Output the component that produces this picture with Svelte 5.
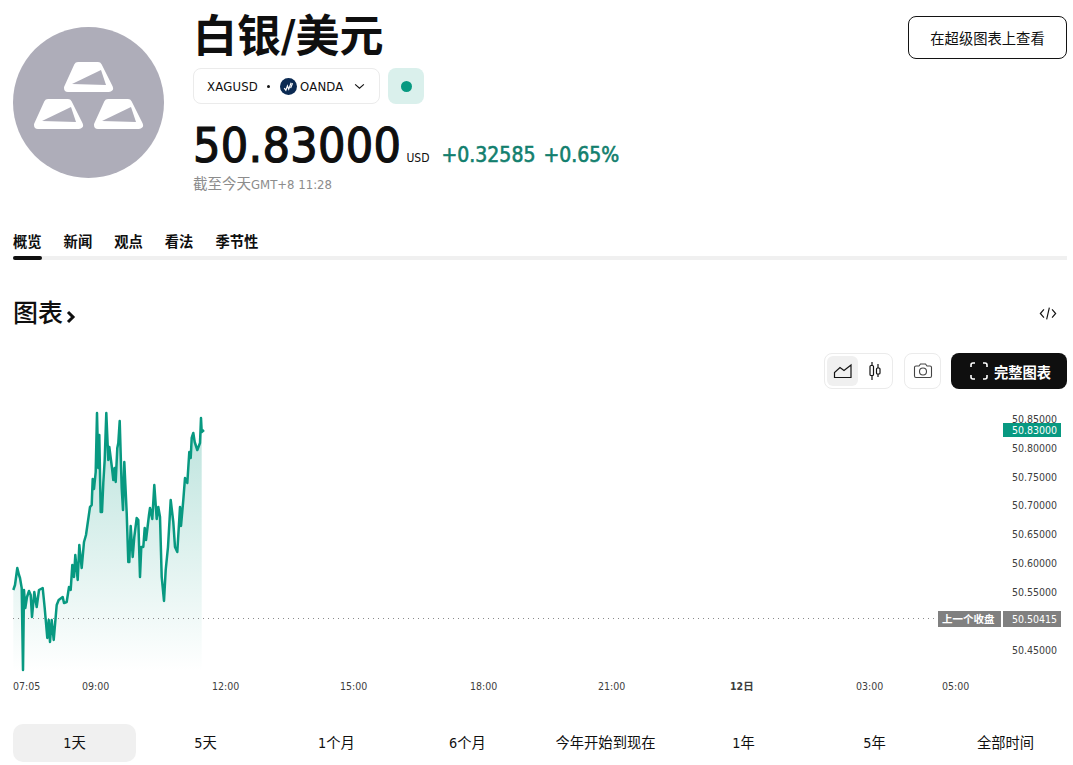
<script>
    const tabs = ['概览', '新闻', '观点', '看法', '季节性'];
    const ranges = ['1天', '5天', '1个月', '6个月', '今年开始到现在', '1年', '5年', '全部时间'];

    const points = [
        [13.3,590],[15,585],[17.3,568],[19,575],[20,578],[21.7,588],[23,670],[24,590],[25.3,608],[27,597],
        [29,591],[30.7,595],[32,617],[34.3,592],[36.7,607],[39,590],[42.7,588],[44.7,608],[47.3,638],[48.7,620],
        [50,642],[51.7,620],[53.7,640],[56.7,605],[58.7,600],[62.7,597],[64,603],[66.7,602],[69,587],[70.7,590],
        [72.3,565],[74,577],[75.3,555],[77.7,580],[79.3,545],[81.7,568],[84,542],[86,535],[90,507],[91.7,505],
        [92.7,479],[94,489],[95.7,472],[97,413],[98.3,468],[99.3,435],[100.7,512],[102,512],[103.3,483],[104.7,460],
        [106.3,413],[108.3,460],[109.3,447],[112,468],[113.3,480],[114.7,468],[115.7,482],[117.3,448],[118.3,443],[119.7,421],
        [121.7,488],[123,510],[124.3,462],[126.7,513],[128.3,562],[129.3,562],[130.7,526],[132.7,557],[134.3,537],[136.7,518],
        [138.3,520],[140,577],[141.3,547],[143.3,547],[144.7,528],[146,540],[149,515],[150,508],[152.3,519],[154.3,485],
        [156.7,519],[158.3,507],[160,517],[161.7,577],[164,601],[165.7,570],[168,547],[170.7,500],[173.3,522],[175,547],
        [177.3,552],[180,507],[181,526],[183.3,500],[185,478],[187.3,483],[189.3,452],[190.7,458],[191.7,438],[193.3,433],
        [194.7,442],[197.3,450],[200,443],[201,418],[201.7,432],[204,430]
    ];

    const line = points.map((p) => p.join(',')).join(' ');
    const area = points.slice(0, -1).map((p) => p.join(',')).join(' ') + ' 201.7,672 13.3,672';

    const prices = [
        ['50.85000', 419], ['50.80000', 448], ['50.75000', 477], ['50.70000', 505],
        ['50.65000', 534], ['50.60000', 563], ['50.55000', 592], ['50.45000', 650]
    ];
    const times = [
        ['07:05', 13], ['09:00', 82], ['12:00', 212], ['15:00', 340], ['18:00', 470],
        ['21:00', 598], ['12日', 730, true], ['03:00', 856], ['05:00', 942]
    ];
    const bars = [[0, 0], [-30, 37], [30, 37]];
</script>

<div class="page">
    <header class="head">
        <div class="logo">
            <svg viewBox="0 0 151 151" width="151" height="151">
                {#each bars as [dx, dy]}
                    <g transform="translate({dx} {dy})">
                        <path class="bar" d="M65 39h20l11 22H55z" />
                        <path class="gap" d="M59 57 88 43 93 58z" />
                    </g>
                {/each}
            </svg>
        </div>
        <div class="info">
            <h1>白银/美元</h1>
            <div class="chips">
                <div class="chip">
                    <span>XAGUSD</span>
                    <i class="dot"></i>
                    <svg class="broker" viewBox="0 0 16 16" width="17" height="17">
                        <circle cx="8" cy="8" r="8" fill="#0b2a52" />
                        <path d="M4 9.500 5.500 11.500 7 7.500 8.200 10.500 10.500 4.500M10 9.500 11.800 5" fill="none" stroke="#fff" stroke-width="1.100" />
                    </svg>
                    <span>OANDA</span>
                    <svg class="caret" viewBox="0 0 12 8" width="11" height="7">
                        <path d="M1 1.500 6 6 11 1.500" fill="none" stroke="#131313" stroke-width="1.300" />
                    </svg>
                </div>
                <div class="status"><i></i></div>
            </div>
            <div class="quote">
                <span class="price">50.83000</span>
                <span class="cur">USD</span>
                <span class="chg">+0.32585</span>
                <span class="chg">+0.65%</span>
            </div>
            <div class="asof">截至今天<span>GMT+8 11:28</span></div>
        </div>
        <button class="super">在超级图表上查看</button>
    </header>

    <nav class="tabs">
        {#each tabs as tab, i}
            <span class="tab" class:on={i === 0}>{tab}</span>
        {/each}
    </nav>

    <div class="section">
        <h2>图表<svg viewBox="0 0 10 14" width="10" height="14"><path d="M2 2l5 5-5 5" fill="none" stroke="#0f0f0f" stroke-width="3" /></svg></h2>
        <svg class="code" viewBox="0 0 20 16" width="18" height="15">
            <path d="M5.500 3.500 1.500 8l4 4.500M14.500 3.500l4 4.500-4 4.500M11.500 1.500 8.500 14.500" fill="none" stroke="#131313" stroke-width="1.300" />
        </svg>
    </div>

    <div class="tools">
        <div class="group first">
            <span class="tool active">
                <svg viewBox="0 0 20 16" width="20" height="16"><path d="M1.500 14.500V9.500L7 4.500l4 3 7-5.500v12.500z" fill="none" stroke="#131313" stroke-width="1.200" /></svg>
            </span>
            <span class="tool">
                <svg viewBox="0 0 16 20" width="16" height="20"><path d="M5 1v3M5 15v4M11 3v4M11 13v3" stroke="#131313" stroke-width="1.200" /><rect x="3" y="4.500" width="3.500" height="10" rx="1" fill="none" stroke="#131313" stroke-width="1.200" /><rect x="9.500" y="7" width="3.500" height="6" rx="1" fill="none" stroke="#131313" stroke-width="1.200" /></svg>
            </span>
        </div>
        <div class="group">
            <span class="tool">
                <svg viewBox="0 0 20 16" width="20" height="16"><path d="M1.500 4.500a1.500 1.500 0 0 1 1.500-1.500h3l1.500-2h5l1.500 2h3a1.500 1.500 0 0 1 1.500 1.500v8.500a1.500 1.500 0 0 1-1.500 1.500H3a1.500 1.500 0 0 1-1.500-1.500z" fill="none" stroke="#444" stroke-width="1.100" /><circle cx="10" cy="8.500" r="3.500" fill="none" stroke="#444" stroke-width="1.100" /></svg>
            </span>
        </div>
        <button class="full">
            <svg viewBox="0 0 18 18" width="18" height="18"><path d="M1 5V3a2 2 0 0 1 2-2h2M13 1h2a2 2 0 0 1 2 2v2M17 13v2a2 2 0 0 1-2 2h-2M5 17H3a2 2 0 0 1-2-2v-2" fill="none" stroke="#fff" stroke-width="1.600" /></svg>
            完整图表
        </button>
    </div>

    <svg class="chart" viewBox="0 400 1073 310" width="1073" height="310">
        <defs>
            <linearGradient id="fill" x1="0" y1="413" x2="0" y2="672" gradientUnits="userSpaceOnUse">
                <stop offset="0" stop-color="#089981" stop-opacity="0.28" />
                <stop offset="1" stop-color="#089981" stop-opacity="0" />
            </linearGradient>
        </defs>
        <polygon points={area} fill="url(#fill)" />
        <line x1="13" x2="938" y1="618.500" y2="618.500" stroke="#8a8a8a" stroke-dasharray="1 4" />
        <polyline points={line} fill="none" stroke="#089981" stroke-width="2.500" stroke-linejoin="round" />

        {#each prices as [label, y]}
            <text class="axis" x="1012" y={y + 4}>{label}</text>
        {/each}
        <rect x="1003" y="423" width="58" height="14" fill="#089981" />
        <text class="axis light" x="1012" y="434">50.83000</text>

        <rect x="938" y="611" width="63" height="16" fill="#808080" />
        <rect x="1003" y="611" width="58" height="16" fill="#808080" />
        <text class="axis light strong" x="942" y="623">上一个收盘</text>
        <text class="axis light" x="1012" y="623">50.50415</text>

        {#each times as [label, x, strong]}
            <text class="axis" class:strong x={x} y="690">{label}</text>
        {/each}
    </svg>

    <div class="ranges">
        {#each ranges as range, i}
            <span class="range" class:on={i === 0}>{range}</span>
        {/each}
    </div>
</div>

<style>
    :global(body) {
        margin: 0;
        background: #fff;
    }

    .page {
        width: 1054px;
        height: 765px;
        padding-left: 13px;
        overflow: hidden;
        color: #0f0f0f;
        font-family: "DejaVu Sans Condensed", "Noto Sans CJK SC", sans-serif;
    }

    .head {
        display: flex;
        align-items: flex-start;
        height: 200px;
    }

    .logo {
        flex: none;
        width: 151px;
        height: 151px;
        margin-top: 27px;
        border-radius: 50%;
        background: #aeadb9;
    }

    .bar {
        fill: #fff;
        stroke: #fff;
        stroke-width: 8;
        stroke-linejoin: round;
    }

    .gap {
        fill: #aeadb9;
    }

    .info {
        margin-left: 29px;
    }

    h1 {
        margin: 9px 0 0;
        font-size: 44px;
        line-height: 56px;
        font-weight: 700;
    }

    .chips {
        display: flex;
        gap: 8px;
        margin-top: 3px;
    }

    .chip {
        display: flex;
        align-items: center;
        box-sizing: border-box;
        width: 187px;
        height: 36px;
        padding: 0 14px 0 13px;
        border: 1px solid #ebebeb;
        border-radius: 8px;
        font-size: 13px;
        letter-spacing: 0.2px;
    }

    .dot {
        width: 3px;
        height: 3px;
        margin: 0 10px 0 9px;
        border-radius: 50%;
        background: #131313;
    }

    .broker {
        margin-right: 3px;
    }

    .caret {
        margin-left: auto;
    }

    .status {
        display: flex;
        align-items: center;
        justify-content: center;
        width: 36px;
        height: 36px;
        border-radius: 8px;
        background: #daf0ec;
    }

    .status i {
        width: 11px;
        height: 11px;
        border-radius: 50%;
        background: #089981;
    }

    .quote {
        display: flex;
        align-items: baseline;
        margin-top: 12px;
        height: 58px;
        line-height: 58px;
    }

    .price {
        font-size: 48px;
        letter-spacing: 0.3px;
        -webkit-text-stroke: 1.2px #0f0f0f;
    }

    .cur {
        margin: 0 12px 0 5px;
        font-size: 12px;
    }

    .chg {
        margin-right: 8px;
        color: #137f6e;
        font-size: 21px;
        -webkit-text-stroke: 0.6px #137f6e;
    }

    .asof {
        margin-top: 0;
        color: #8c8c8c;
        font-size: 14.500px;
        line-height: 20px;
    }

    .asof span {
        font-size: 13px;
    }

    .super {
        box-sizing: border-box;
        width: 159px;
        height: 43px;
        margin: 16px 0 0 auto;
        border: 1px solid #131313;
        border-radius: 8px;
        background: #fff;
        color: #0f0f0f;
        font: 14.300px "DejaVu Sans Condensed", "Noto Sans CJK SC", sans-serif;
    }

    .tabs {
        display: flex;
        gap: 22px;
        margin-top: 30px;
        border-bottom: 4px solid #f0f0f0;
    }

    .tab {
        position: relative;
        padding-bottom: 2px;
        font-size: 14.300px;
        line-height: 24px;
        font-weight: 700;
    }

    .tab.on::after {
        content: "";
        position: absolute;
        left: 0;
        right: 0;
        bottom: -4px;
        height: 4px;
        border-radius: 2px;
        background: #0f0f0f;
    }

    .section {
        display: flex;
        align-items: center;
        justify-content: space-between;
        margin-top: 36px;
        height: 34px;
    }

    h2 {
        display: flex;
        align-items: center;
        margin: 1px 0 0;
        font-size: 25px;
        line-height: 34px;
        font-weight: 500;
    }

    h2 svg {
        margin: 6px 0 0 3px;
    }

    .code {
        margin-right: 10px;
    }

    .tools {
        display: flex;
        justify-content: flex-end;
        gap: 10px;
        margin-top: 23px;
        height: 36px;
    }

    .group {
        display: flex;
        box-sizing: border-box;
        align-items: center;
        gap: 1px;
        padding: 2px;
        border: 1px solid #ebebeb;
        border-radius: 8px;
    }

    .group.first {
        margin-right: 1px;
    }

    .tool {
        display: flex;
        align-items: center;
        justify-content: center;
        width: 31px;
        height: 30px;
        border-radius: 6px;
    }

    .tool.active {
        background: #f0f0f0;
    }

    .full {
        display: flex;
        align-items: center;
        justify-content: center;
        gap: 6px;
        width: 116px;
        padding: 0 0 0 3px;
        border: 0;
        border-radius: 8px;
        background: #0f0f0f;
        color: #fff;
        font: 700 14.300px "DejaVu Sans Condensed", "Noto Sans CJK SC", sans-serif;
    }

    .chart {
        display: block;
        margin: 11px 0 0 -13px;
    }

    .axis {
        fill: #3d3d3d;
        font-size: 10.500px;
    }

    .axis.light {
        fill: #fff;
    }

    .axis.strong {
        font-weight: 700;
    }

    .ranges {
        display: grid;
        grid-template-columns: repeat(4, 1fr) 137px repeat(3, 1fr);
        gap: 8px;
        margin-top: 14px;
    }

    .range {
        height: 38px;
        border-radius: 10px;
        font-size: 14.300px;
        line-height: 38px;
        text-align: center;
    }

    .range.on {
        background: #f0f0f0;
    }
</style>
